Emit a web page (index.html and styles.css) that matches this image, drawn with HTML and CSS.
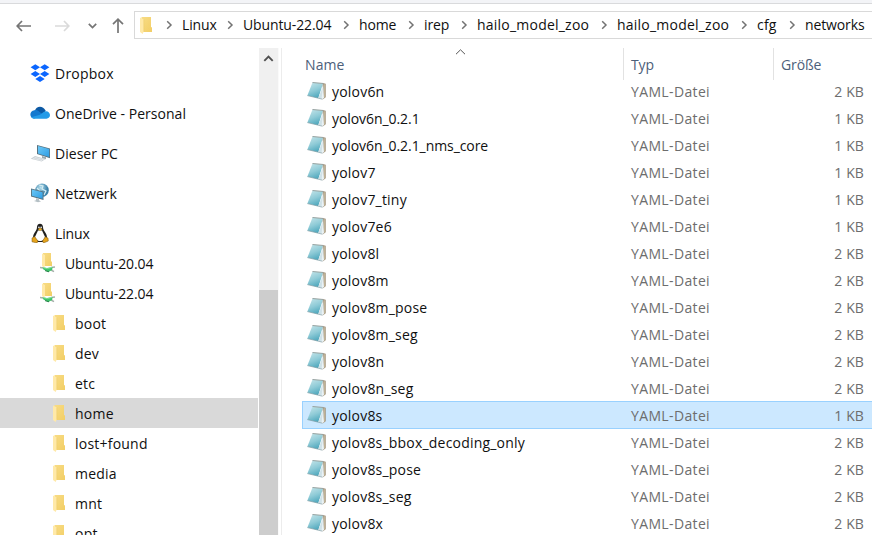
FILE: index.html
```html
<!DOCTYPE html>
<html lang="de">
<head>
<meta charset="utf-8">
<title>networks</title>
<link rel="stylesheet" href="styles.css">
</head>
<body>
<svg class="defs" width="0" height="0">
  <defs>
    <linearGradient id="page" x1=".2" y1="0" x2=".6" y2="1"><stop offset="0" stop-color="#c2e3e8"/><stop offset=".5" stop-color="#8fcbd7"/><stop offset="1" stop-color="#4aa5bb"/></linearGradient>
    <linearGradient id="fold" x1="0" y1="0" x2="1" y2="1"><stop offset="0" stop-color="#f8dc85"/><stop offset="1" stop-color="#f2ce66"/></linearGradient>
    <linearGradient id="screen" x1="0" y1="0" x2="1" y2="1"><stop offset="0" stop-color="#6cc8f7"/><stop offset="1" stop-color="#2e9de3"/></linearGradient>
    <radialGradient id="globe" cx=".4" cy=".3"><stop offset="0" stop-color="#b8e0ee"/><stop offset="1" stop-color="#3c83ab"/></radialGradient>
    <symbol id="note" viewBox="0 0 20 20">
      <path d="M15.5 2l3.2.8v13.4L16 18.3l-2-.5z" fill="#9c8d75"/>
      <path d="M17 3l.8.3v13l-.8.8z" fill="#c9bb9d"/>
      <path d="M5.5 1.5L16 2.5 11.5 17.2.4 14.6z" fill="url(#page)"/>
      <path d="M5.7.9l10.9 1-.4 1.2L5.3 2.1z" fill="#98a3a1"/>
      <path d="M16.2 3l.8 14-1.6 1.2-4.2-1.2z" fill="#eaf2f5"/>
      <path d="M15.8 6.5L14.6 17.5l-3.2-.7z" fill="#cfe1e7"/>
      <path d="M.4 14.6l11 2.6 4 1" fill="none" stroke="#7f9ca4" stroke-width=".7"/>
    </symbol>
    <symbol id="folder" viewBox="0 0 12 17">
      <path d="M1.5 0H11v10.3h1V15H1.5z" fill="url(#fold)"/>
      <path d="M0 .5l3.8 2v11.7L2.7 17 0 15z" fill="#ffe9a8"/>
      <path d="M3.8 2.5v12" stroke="#edcb6a" stroke-width=".5"/>
    </symbol>
    <symbol id="netfolder" viewBox="0 0 15 20">
      <path d="M3 0h8v8.5h1V13H3z" fill="url(#fold)"/>
      <path d="M2 .5l3 1.5v10.5L4 15l-2-2z" fill="#ffe9a8"/>
      <path d="M0 14.5l3.5.4M11 14.5l4-.6M11 17l3 1.7" stroke="#a7b0ab" stroke-width="1.5"/>
      <path d="M2.5 14.3L7 15l5.5-1.1-.3 3-3.8 2-5-2.3z" fill="#3fc46b"/>
      <path d="M3 14.5l4.2 1.2 5-1.3" stroke="#8be29e" fill="none" stroke-width=".8"/>
      <path d="M5 17.6l4 1.2" stroke="#267e47"/>
    </symbol>
    <symbol id="chev" viewBox="0 0 7 10"><path d="M1.2 1.2L5 5 1.2 8.8" fill="none" stroke="#737373" stroke-width="1.5"/></symbol>
  </defs>
</svg>
<div class="window">
  <header class="toolbar">
    <svg class="nav back" width="16" height="12" viewBox="0 0 16 12"><path d="M6 1L1.2 6 6 11M1.5 6H15" /></svg>
    <svg class="nav forward" width="16" height="12" viewBox="0 0 16 12"><path d="M10 1l4.8 5L10 11M14.5 6H1" /></svg>
    <svg class="nav recent" width="9" height="6" viewBox="0 0 9 6"><path d="M.8 .8L4.5 4.6 8.2 .8" /></svg>
    <svg class="nav up" width="12" height="16" viewBox="0 0 12 16"><path d="M1 6.2L6 1.2l5 5M6 1.5V15" /></svg>
    <nav class="address">
      <svg class="folder"><use href="#folder"/></svg>
      <svg class="sep"><use href="#chev"/></svg><span class="w-linux">Linux</span>
      <svg class="sep"><use href="#chev"/></svg><span class="w-ubuntu">Ubuntu-22.04</span>
      <svg class="sep"><use href="#chev"/></svg><span class="w-home">home</span>
      <svg class="sep"><use href="#chev"/></svg><span class="w-irep">irep</span>
      <svg class="sep"><use href="#chev"/></svg><span class="w-zoo wide">hailo_model_zoo</span>
      <svg class="sep"><use href="#chev"/></svg><span class="w-zoo wide">hailo_model_zoo</span>
      <svg class="sep"><use href="#chev"/></svg><span class="w-cfg wide">cfg</span>
      <svg class="sep"><use href="#chev"/></svg><span>networks</span>
    </nav>
  </header>
  <main class="content">
    <aside class="tree">
      <div class="item root"><svg class="ico" viewBox="0 0 20 20"><path fill="#0b66ff" d="M5.3 1.2l4.7 3-4.7 3-4.7-3zM14.7 1.2l4.7 3-4.7 3-4.7-3zM5.3 8l4.7 3-4.7 3-4.7-3zM14.7 8l4.7 3-4.7 3-4.7-3zM10 13l4.7 3-4.7 3-4.7-3z"/></svg><span class="wide">Dropbox</span></div>
      <div class="item root"><svg class="ico" viewBox="0 0 20 20"><path fill="#0c59a4" d="M5 7.5C6 3.5 12.5 1.5 15.8 8L11 13z"/><path fill="#1479cf" d="M4.5 15.5C-1 15-1 8 4.4 7.2c2-.4 3.5.4 4.6 1.2l4 3z"/><path fill="#249be8" d="M10 11.8l4-3c3-1.7 6 .4 6 3.3 0 2-1.4 3.6-3.5 3.6H4.3c-1.5 0-2.5-.6-3.2-1.5z"/></svg><span class="mid">OneDrive - Personal</span></div>
      <div class="item root"><svg class="ico" viewBox="0 0 20 20"><path fill="#58727f" d="M7 2l13 3.4v9.8L7 11z"/><path fill="url(#screen)" d="M8 3.1l11.2 3v8L8 10.4z"/><path fill="#9ba8ad" d="M12 13l4 1.2v2l-4-1z"/><path fill="#c9d0d4" d="M5 13l10.5 3-3.8 2.4L.7 15.8z"/><path d="M2.8 15.3l9.2 2.3M4.5 14.3l9.2 2.3" stroke="#f3f5f6" stroke-width=".6"/></svg><span class="mid">Dieser PC</span></div>
      <div class="item root"><svg class="ico" viewBox="0 0 20 20"><circle cx="12" cy="7.3" r="6.8" fill="url(#globe)"/><path d="M9 2l4 1-1 3 4 2-2 4M7 5l3 3" stroke="#d6edf2" stroke-width="1.2" fill="none"/><path fill="#58727f" d="M1 5.5l12.5 3V17L1 13.5z"/><path fill="url(#screen)" d="M1.9 6.6l10.7 2.7v6.4L1.9 12.8z"/><path fill="#b5c0c5" d="M6 15.2l3 .8v1.3l2 1.2-3 .8-4-1.2 2-.8z"/></svg><span class="mid">Netzwerk</span></div>
      <div class="item root last"><svg class="ico" viewBox="0 0 20 20"><path fill="#20201f" d="M7 4c0-4.5 6-4.5 6 0 0 4 4 6 4 10.5L14 19H6l-3-4.5C3 10 7 8 7 4z"/><path fill="#fff" d="M8 7.5h4l2.8 6c.5 3-2 4.5-4.8 4.5s-5.3-1.5-4.8-4.5z"/><circle cx="8.9" cy="4.3" r=".9" fill="#ddd"/><circle cx="11.2" cy="4.3" r=".9" fill="#ddd"/><path fill="#eaae28" d="M8 6l2-1 2.5 1L10 8z"/><path fill="#e5a31b" stroke="#765414" stroke-width=".5" d="M2 15l2.5-1.5L8 18l-1 2-5-1.2zM18 15l-2.7-1.2L12.5 18l1 2 4.8-2z"/></svg><span>Linux</span></div>
      <div class="item distro"><svg class="netfolder"><use href="#netfolder"/></svg><span>Ubuntu-20.04</span></div>
      <div class="item distro"><svg class="netfolder"><use href="#netfolder"/></svg><span>Ubuntu-22.04</span></div>
      <div class="item dir"><svg class="folder"><use href="#folder"/></svg><span>boot</span></div>
      <div class="item dir"><svg class="folder"><use href="#folder"/></svg><span>dev</span></div>
      <div class="item dir"><svg class="folder"><use href="#folder"/></svg><span>etc</span></div>
      <div class="item dir current"><svg class="folder"><use href="#folder"/></svg><span>home</span></div>
      <div class="item dir"><svg class="folder"><use href="#folder"/></svg><span>lost+found</span></div>
      <div class="item dir"><svg class="folder"><use href="#folder"/></svg><span>media</span></div>
      <div class="item dir"><svg class="folder"><use href="#folder"/></svg><span>mnt</span></div>
      <div class="item dir"><svg class="folder"><use href="#folder"/></svg><span>opt</span></div>
    </aside>
    <div class="scrollbar">
      <svg width="11" height="7" viewBox="0 0 11 7"><path d="M1.3 5.8l4.2-4.2 4.2 4.2" fill="none" stroke="#505050" stroke-width="1.9"/></svg>
      <div class="thumb"></div>
    </div>
    <section class="files">
      <div class="head">
        <div class="name">Name</div><div class="type">Typ</div><div class="size">Größe</div>
        <svg class="sort" width="11" height="6" viewBox="0 0 11 6"><path d="M1 5.2L5.5 .8 10 5.2" fill="none" stroke="#555"/></svg>
      </div>
      <div class="row"><svg class="note"><use href="#note"/></svg><span class="name">yolov6n</span><span class="type">YAML-Datei</span><span class="size">2 KB</span></div>
      <div class="row"><svg class="note"><use href="#note"/></svg><span class="name tight">yolov6n_0.2.1</span><span class="type">YAML-Datei</span><span class="size">1 KB</span></div>
      <div class="row"><svg class="note"><use href="#note"/></svg><span class="name tight">yolov6n_0.2.1_nms_core</span><span class="type">YAML-Datei</span><span class="size">1 KB</span></div>
      <div class="row"><svg class="note"><use href="#note"/></svg><span class="name">yolov7</span><span class="type">YAML-Datei</span><span class="size">1 KB</span></div>
      <div class="row"><svg class="note"><use href="#note"/></svg><span class="name">yolov7_tiny</span><span class="type">YAML-Datei</span><span class="size">1 KB</span></div>
      <div class="row"><svg class="note"><use href="#note"/></svg><span class="name">yolov7e6</span><span class="type">YAML-Datei</span><span class="size">1 KB</span></div>
      <div class="row"><svg class="note"><use href="#note"/></svg><span class="name">yolov8l</span><span class="type">YAML-Datei</span><span class="size">2 KB</span></div>
      <div class="row"><svg class="note"><use href="#note"/></svg><span class="name">yolov8m</span><span class="type">YAML-Datei</span><span class="size">2 KB</span></div>
      <div class="row"><svg class="note"><use href="#note"/></svg><span class="name">yolov8m_pose</span><span class="type">YAML-Datei</span><span class="size">2 KB</span></div>
      <div class="row"><svg class="note"><use href="#note"/></svg><span class="name">yolov8m_seg</span><span class="type">YAML-Datei</span><span class="size">2 KB</span></div>
      <div class="row"><svg class="note"><use href="#note"/></svg><span class="name">yolov8n</span><span class="type">YAML-Datei</span><span class="size">2 KB</span></div>
      <div class="row"><svg class="note"><use href="#note"/></svg><span class="name">yolov8n_seg</span><span class="type">YAML-Datei</span><span class="size">2 KB</span></div>
      <div class="row selected"><svg class="note"><use href="#note"/></svg><span class="name">yolov8s</span><span class="type">YAML-Datei</span><span class="size">1 KB</span></div>
      <div class="row"><svg class="note"><use href="#note"/></svg><span class="name">yolov8s_bbox_decoding_only</span><span class="type">YAML-Datei</span><span class="size">2 KB</span></div>
      <div class="row"><svg class="note"><use href="#note"/></svg><span class="name">yolov8s_pose</span><span class="type">YAML-Datei</span><span class="size">2 KB</span></div>
      <div class="row"><svg class="note"><use href="#note"/></svg><span class="name">yolov8s_seg</span><span class="type">YAML-Datei</span><span class="size">2 KB</span></div>
      <div class="row"><svg class="note"><use href="#note"/></svg><span class="name">yolov8x</span><span class="type">YAML-Datei</span><span class="size">2 KB</span></div>
    </section>
  </main>
</div>
</body>
</html>
```
FILE: styles.css
```css
* { box-sizing: border-box; }
body { margin: 0; overflow: hidden; background: #fff; color: #101010; font: 14px/20px "Open Sans", "Noto Sans", sans-serif; letter-spacing: -0.12px; }
svg { display: block; flex: none; }
.defs { position: absolute; }
.wide { letter-spacing: 0.22px; }
.mid { letter-spacing: 0.03px; }
.window { display: flex; flex-direction: column; height: 535px; overflow: hidden; border-top: 3px solid #f3f4f7; }
.toolbar { display: flex; flex: none; align-items: center; height: 45px; padding: 0 0 0 16px; border-top: 1px solid #d9dadc; }
.nav { fill: none; stroke: #757575; stroke-width: 1.7; }
.forward { margin-left: 22px; stroke: #dadada; }
.recent { margin-left: 18px; }
.up { margin-left: 15px; }
.address { display: flex; flex: 1; align-items: center; height: 28px; margin: -2px 0 0 10px; padding-left: 5px; border: 1px solid #d9d9d9; border-right: 0; white-space: nowrap; }
.folder { width: 12px; height: 17px; }
.address .folder { margin-right: 9px; }
.sep { width: 7px; height: 10px; margin: 0 9px 0 10px; }
.address .folder + .sep { margin-left: 5px; }
.w-linux { width: 35px; }
.w-ubuntu { width: 90px; }
.w-home { width: 39px; }
.w-irep { width: 27px; }
.w-zoo { width: 114px; }
.w-cfg { width: 22px; }
.content { display: flex; flex: 1; min-height: 0; }
.tree { width: 258px; padding-top: 10px; overflow: hidden; }
.item { display: flex; align-items: center; height: 30px; white-space: nowrap; }
.item span { padding-top: 2px; }
.root { margin-bottom: 10px; padding-left: 30px; }
.root.last { margin-bottom: 0; }
.ico { width: 20px; height: 20px; margin-right: 5px; }
.distro { padding-left: 40px; }
.netfolder { width: 15px; height: 20px; margin-right: 10px; }
.dir { padding-left: 53px; letter-spacing: 0.22px; }
.dir .folder { margin-right: 10px; }
.current { background: #d9d9d9; }
.scrollbar { display: flex; flex-direction: column; align-items: center; width: 20px; margin-left: 1px; padding-top: 7px; background: #f0f0f0; border-right: 1px solid #fafafa; }
.thumb { width: 19px; flex: 1; margin-top: 228px; background: #cdcdcd; }
.files { flex: 1; min-width: 0; margin-left: 2px; padding-left: 20px; border-left: 1px solid #ececec; }
.head { position: relative; display: flex; height: 32px; margin-bottom: -3px; color: #4c607a; line-height: 33px; }
.head .name { width: 321px; padding-left: 3px; letter-spacing: 0.1px; }
.head .type { width: 150px; padding-left: 7px; border-left: 1px solid #e2e2e2; }
.head .size { padding-left: 7px; border-left: 1px solid #e2e2e2; }
.sort { position: absolute; left: 153px; top: 1px; }
.row { display: flex; align-items: center; height: 28px; margin-bottom: -1px; padding: 0 8px 0 4px; border: 1px solid transparent; border-right: 0; white-space: nowrap; }
.row span { padding-top: 2px; }
.note { width: 20px; height: 20px; margin-top: -1px; }
.row .name { width: 304px; padding-left: 5px; letter-spacing: 0.2px; }
.row .tight { letter-spacing: -0.07px; }
.row .type { flex: 1; color: #6d6d6d; letter-spacing: 0.36px; }
.row .size { color: #6d6d6d; letter-spacing: 0.1px; }
.selected { background: #cce8ff; border-color: #99d1ff; }
```
